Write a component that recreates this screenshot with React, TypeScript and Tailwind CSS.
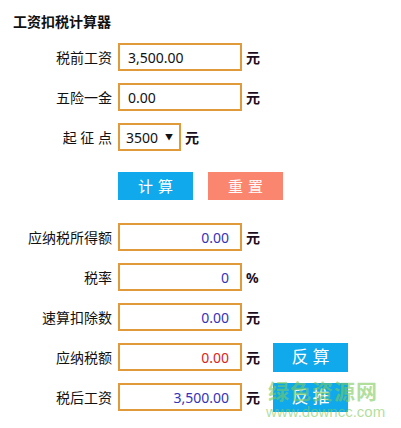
import * as React from 'react';

const font = { fontFamily: '"Noto Sans", "Noto Sans CJK SC", sans-serif' };

const Unit: React.FC<{ children: React.ReactNode }> = ({ children }) => (
  <span className="ml-[4px] w-[14px] text-[14px] font-bold text-[#1b0d1b]">{children}</span>
);

const Label: React.FC<{ children: React.ReactNode }> = ({ children }) => (
  <div className="w-[112px] mr-[6px] shrink-0 text-right text-[14px] text-[#111] whitespace-pre">{children}</div>
);

const inputBox = 'h-[28px] w-[124px] border-2 border-[#e09a3a] bg-white flex items-center text-[14px]';

export default function App() {
  const results = [
    { label: '应纳税所得额', value: '0.00', unit: '元', color: 'text-[#3333bb]' },
    { label: '税率', value: '0', unit: '%', color: 'text-[#3333bb]' },
    { label: '速算扣除数', value: '0.00', unit: '元', color: 'text-[#3333bb]' },
    { label: '应纳税额', value: '0.00', unit: '元', color: 'text-[#dd2222]', btn: '反算' },
    { label: '税后工资', value: '3,500.00', unit: '元', color: 'text-[#3333bb]', btn: '反推' },
  ];

  return (
    <div className="relative w-[401px] h-[428px] bg-white overflow-hidden" style={font}>
      <div className="pt-[12px]">
        <div className="h-[20px] pl-[13px] text-[14px] font-bold leading-[20px] text-[#111]">工资扣税计算器</div>

        <div className="mt-[11px] flex flex-col gap-[12px]">
          <div className="flex items-center h-[28px]">
            <Label>税前工资</Label>
            <div className={`${inputBox} pl-[8px] text-[#111]`}>3,500.00</div>
            <Unit>元</Unit>
          </div>
          <div className="flex items-center h-[28px]">
            <Label>五险一金</Label>
            <div className={`${inputBox} pl-[8px] text-[#111]`}>0.00</div>
            <Unit>元</Unit>
          </div>
          <div className="flex items-center h-[28px]">
            <Label>{'起 征 点'}</Label>
            <div className="h-[28px] w-[63px] border-2 border-[#e09a3a] bg-white flex items-center justify-between pl-[6px] pr-[6px] text-[14px] text-[#111]">
              <span>3500</span>
              <span className="text-[8px]">▼</span>
            </div>
            <Unit>元</Unit>
          </div>
        </div>

        <div className="mt-[21px] flex gap-[15px] pl-[118px]">
          <button className="h-[28px] w-[75px] bg-[#10a9ec] pl-[5px] text-white text-[15px] tracking-[5px]">计算</button>
          <button className="h-[28px] w-[75px] bg-[#fb8670] pl-[5px] text-white text-[15px] tracking-[5px]">重置</button>
        </div>

        <div className="mt-[23px] flex flex-col gap-[12px]">
          {results.map((r) => (
            <div key={r.label} className="flex items-center h-[28px]">
              <Label>{r.label}</Label>
              <div className={`${inputBox} justify-end pr-[11px] ${r.color}`}>{r.value}</div>
              <Unit>{r.unit}</Unit>
              {r.btn && (
                <button className="ml-[13px] h-[29px] w-[75px] bg-[#10a9ec] pl-[4px] text-white text-[17px] tracking-[4px]">
                  {r.btn}
                </button>
              )}
            </div>
          ))}
        </div>
      </div>

      <div className="absolute left-[266px] top-[378px] w-[114px] pointer-events-none text-center">
        <div className="text-[21px] font-bold leading-[26px] tracking-[1px] text-[#7cc95a]/60">绿色资源网</div>
        <div className="text-[15px] leading-[16px] text-[#7cc95a]/60" style={{ fontFamily: '"Liberation Sans", sans-serif' }}>www.downcc.com</div>
      </div>
    </div>
  );
}
